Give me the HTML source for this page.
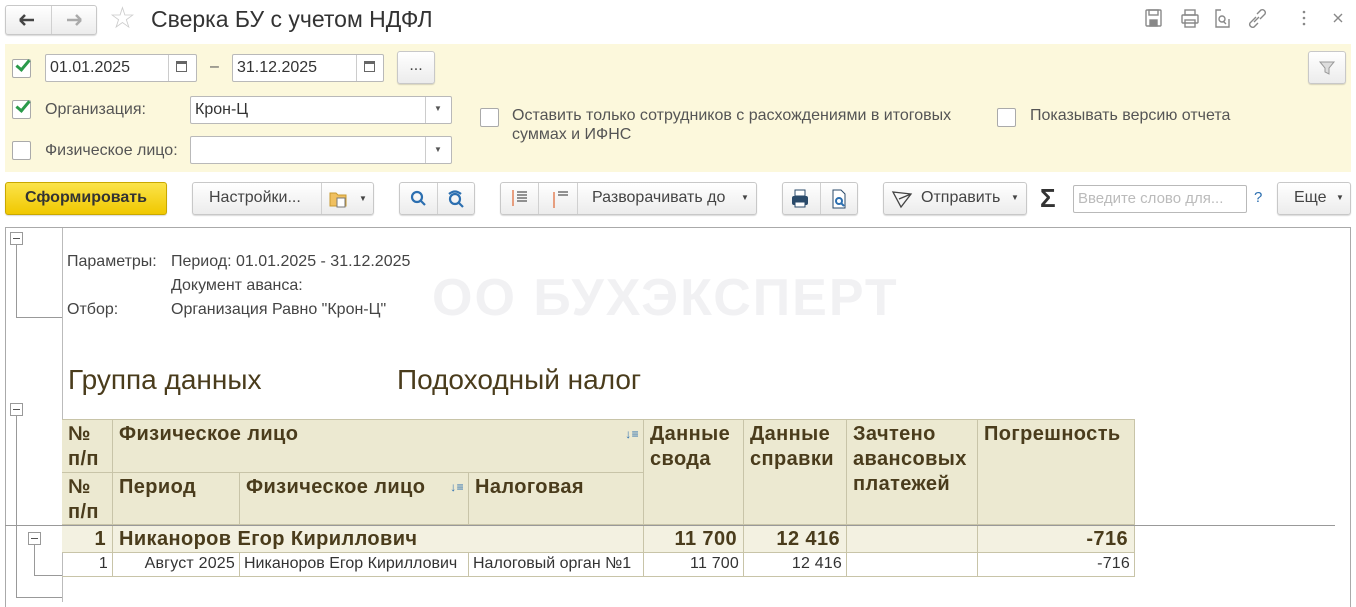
<!DOCTYPE html>
<html><head><meta charset="utf-8"><style>
*{box-sizing:border-box;margin:0;padding:0}
body{width:1356px;height:602px;background:#fff;font-family:"Liberation Sans",Arial,sans-serif;font-size:16px;color:#333;position:relative;overflow:hidden}
.a{position:absolute}
.btn{position:absolute;height:32px;border:1px solid #c8c8c8;border-radius:3px;background:linear-gradient(#fff,#ececec);box-shadow:0 1px 1px rgba(0,0,0,.15);font-size:16px;color:#444;line-height:30px;text-align:center}
.inp{position:absolute;height:28px;border:1px solid #b9b9b9;border-radius:2px;background:#fff;font-size:16px;line-height:26px;padding-left:4px;color:#333}
.cb{position:absolute;width:19px;height:19px;border:1px solid #aaa;border-radius:2px;background:#fff}
.lbl{position:absolute;color:#555;font-size:16px}
.sep{position:absolute;top:0;bottom:0;width:1px;background:#d0d0d0}
.tc{position:absolute;border-right:1px solid #c8c4a8;border-bottom:1px solid #c8c4a8;color:#4a3c1c;font-weight:bold;font-size:20px;line-height:25px;padding:2px 6px;letter-spacing:0.4px}
.dc{position:absolute;border-right:1px solid #c8c4a8;border-bottom:1px solid #c8c4a8;color:#333;font-size:16px;line-height:22px;padding:0 4px;letter-spacing:0.2px}
.hl{position:absolute;background:#999}
.mb{position:absolute;width:13px;height:13px;border:1px solid #999;background:#fff}
.mb:after{content:"";position:absolute;left:2px;top:5px;width:7px;height:1px;background:#555}
.ck{position:absolute;width:14px;height:8px;border-left:3px solid #2a9a4a;border-bottom:3px solid #2a9a4a;transform:rotate(-50deg)}
</style></head><body>

<div class="btn" style="left:5px;top:5px;width:92px;height:30px"></div>
<div class="a" style="left:51px;top:6px;width:1px;height:28px;background:#d0d0d0"></div>
<svg class="a" style="left:17px;top:12px" width="70" height="16"><path d="M3 8h14M3 8l5-5M3 8l5 5" stroke="#444" stroke-width="2.5" fill="none"/><path d="M50 8h14M64 8l-5-5M64 8l-5 5" stroke="#aaa" stroke-width="2.5" fill="none"/></svg>
<div class="a" style="left:109px;top:2px;font-size:30px;color:#ccc;line-height:34px">☆</div>
<div class="a" style="left:151px;top:5px;font-size:23px;color:#333;line-height:28px">Сверка БУ с учетом НДФЛ</div>
<svg class="a" style="left:1144px;top:8px" width="200" height="22" fill="none" stroke="#888" stroke-width="1.4">
<rect x="2" y="2" width="15" height="16" rx="1"/><rect x="5" y="2" width="9" height="5"/><rect x="6" y="12" width="7" height="6" fill="#888"/>
<rect x="41" y="2" width="10" height="5"/><rect x="38" y="7" width="16" height="8" rx="1"/><rect x="41" y="12" width="10" height="7"/>
<path d="M77 2h-5v17h13v-8M79 13l3 3"/><circle cx="78" cy="11" r="3"/>
<path d="M112 9l-6 6a3 3 0 0 0 4 4l4-4M116 11l5-5a3 3 0 0 0-4-4l-4 4M110 14l5-5"/>
<circle cx="160" cy="4" r="1.3" fill="#888" stroke="none"/><circle cx="160" cy="10" r="1.3" fill="#888" stroke="none"/><circle cx="160" cy="16" r="1.3" fill="#888" stroke="none"/>
<path d="M190 6l8 8M198 6l-8 8"/>
</svg>

<div class="a" style="left:5px;top:44px;width:1346px;height:128px;background:#fcf8dc"></div>
<div class="cb" style="left:12px;top:59px"></div><div class="ck" style="left:16px;top:60px"></div>
<div class="inp" style="left:45px;top:54px;width:152px">01.01.2025</div>
<div class="a" style="left:168px;top:55px;width:1px;height:26px;background:#ccc"></div>
<div class="a" style="left:176px;top:61px;width:11px;height:11px;border:1px solid #666;border-top-width:3px"></div>
<div class="a" style="left:210px;top:58px;color:#555">–</div>
<div class="inp" style="left:232px;top:54px;width:152px">31.12.2025</div>
<div class="a" style="left:356px;top:55px;width:1px;height:26px;background:#ccc"></div>
<div class="a" style="left:364px;top:61px;width:11px;height:11px;border:1px solid #666;border-top-width:3px"></div>
<div class="btn" style="left:397px;top:51px;width:38px;height:33px;line-height:28px">...</div>
<div class="btn" style="left:1308px;top:51px;width:38px;height:33px"></div>
<svg class="a" style="left:1318px;top:60px" width="18" height="16"><path d="M2 2h14l-5 6v6l-4-2V8z" fill="#ddd" stroke="#999"/></svg>

<div class="cb" style="left:12px;top:100px"></div><div class="ck" style="left:16px;top:101px"></div>
<div class="lbl" style="left:45px;top:101px">Организация:</div>
<div class="inp" style="left:190px;top:96px;width:262px">Крон-Ц</div>
<div class="a" style="left:425px;top:97px;width:1px;height:26px;background:#ccc"></div>
<div class="a" style="left:434px;top:104px;font-size:8px;color:#555">▼</div>
<div class="cb" style="left:12px;top:141px"></div>
<div class="lbl" style="left:45px;top:142px">Физическое лицо:</div>
<div class="inp" style="left:190px;top:136px;width:262px"></div>
<div class="a" style="left:425px;top:137px;width:1px;height:26px;background:#ccc"></div>
<div class="a" style="left:434px;top:145px;font-size:8px;color:#555">▼</div>
<div class="cb" style="left:480px;top:108px"></div>
<div class="lbl" style="left:512px;top:106px;line-height:19px">Оставить только сотрудников с расхождениями в итоговых<br>суммах и ИФНС</div>
<div class="cb" style="left:997px;top:108px"></div>
<div class="lbl" style="left:1030px;top:106px;line-height:19px">Показывать версию отчета</div>

<div class="btn" style="left:5px;top:182px;width:162px;height:33px;background:linear-gradient(#fbe34a,#f0c800);border-color:#c9a800;font-weight:bold;color:#333">Сформировать</div>
<div class="btn" style="left:192px;top:182px;width:182px;height:33px;text-align:left;padding-left:16px">Настройки...<div class="sep" style="left:128px"></div>
<svg style="position:absolute;left:136px;top:7px" width="20" height="18"><path d="M1 3h6l2 2h8v11H1z" fill="#f0c060" stroke="#c99a30"/><rect x="8" y="8" width="8" height="9" fill="#fff" stroke="#777"/></svg><span style="position:absolute;left:166px;top:1px;font-size:8px">▼</span></div>
<div class="btn" style="left:399px;top:182px;width:76px;height:33px"><div class="sep" style="left:37px"></div></div>
<svg class="a" style="left:409px;top:189px" width="60" height="20" fill="none" stroke="#2c6fb0" stroke-width="2.2"><circle cx="8" cy="8" r="5"/><path d="M12 12l4 4"/><circle cx="46" cy="10" r="5"/><path d="M50 14l4 4M40 5q6-5 12 0"/></svg>
<div class="btn" style="left:500px;top:182px;width:257px;height:33px;text-align:left;padding-left:91px">Разворачивать до<span style="position:absolute;left:240px;font-size:8px">▼</span><div class="sep" style="left:37px"></div><div class="sep" style="left:76px"></div></div>
<svg class="a" style="left:509px;top:188px" width="65" height="22" stroke-width="1.3"><path d="M4 2v16" stroke="#e07040"/><path d="M8 4h10M8 7h10M8 10h10M8 13h10" stroke="#555"/><path d="M45 4v16" stroke="#e07040"/><path d="M49 4h10M49 7h10" stroke="#555"/></svg>
<div class="btn" style="left:782px;top:182px;width:76px;height:33px"><div class="sep" style="left:37px"></div></div>
<svg class="a" style="left:790px;top:188px" width="64" height="22"><rect x="5" y="2" width="10" height="6" fill="#fff" stroke="#2a4a6a"/><rect x="2" y="8" width="16" height="9" rx="2" fill="#2a4a6a"/><rect x="5" y="14" width="10" height="5" fill="#fff" stroke="#2a4a6a"/><path d="M43 2h8l4 4v14H43z" fill="#fff" stroke="#2a4a6a"/><circle cx="49" cy="13" r="3" fill="none" stroke="#2c6fb0" stroke-width="2"/><path d="M51 15l3 3" stroke="#2c6fb0" stroke-width="2"/></svg>
<div class="btn" style="left:883px;top:182px;width:144px;height:33px;text-align:left;padding-left:37px">Отправить<span style="position:absolute;left:127px;font-size:8px">▼</span></div>
<svg class="a" style="left:891px;top:189px" width="22" height="20"><path d="M2 3l18 2-10 13z M8 10l12-5" fill="none" stroke="#444" stroke-width="1.3"/></svg>
<div class="a" style="left:1040px;top:183px;font-size:26px;font-weight:bold;color:#333">Σ</div>
<div class="inp" style="left:1073px;top:185px;width:174px;height:28px;color:#bbb;font-size:15px">Введите слово для...</div>
<div class="a" style="left:1254px;top:189px;color:#2c6fb0;font-size:15px">?</div>
<div class="btn" style="left:1277px;top:182px;width:74px;height:33px;text-align:left;padding-left:16px">Еще<span style="position:absolute;left:58px;font-size:8px">▼</span></div>

<div class="a" style="left:5px;top:227px;width:1346px;height:380px;border:1px solid #aaa;border-bottom:none"></div>
<div class="hl" style="left:62px;top:228px;width:1px;height:374px;background:#bbb"></div>
<div class="mb" style="left:10px;top:232px"></div>
<div class="hl" style="left:16px;top:245px;width:1px;height:73px"></div>
<div class="hl" style="left:16px;top:317px;width:46px;height:1px"></div>
<div class="mb" style="left:10px;top:403px"></div>
<div class="hl" style="left:16px;top:416px;width:1px;height:182px"></div>
<div class="hl" style="left:16px;top:597px;width:46px;height:1px"></div>
<div class="mb" style="left:28px;top:532px"></div>
<div class="hl" style="left:34px;top:545px;width:1px;height:31px"></div>
<div class="hl" style="left:34px;top:575px;width:28px;height:1px"></div>

<div class="a" style="left:432px;top:268px;font-size:52px;font-weight:bold;color:#f1f1f3;letter-spacing:2px">ОО БУХЭКСПЕРТ</div>

<div class="a" style="left:67px;top:250px;font-size:16px;color:#444;line-height:24px">Параметры:<br><br>Отбор:</div>
<div class="a" style="left:171px;top:250px;font-size:16px;color:#444;line-height:24px">Период: 01.01.2025 - 31.12.2025<br>Документ аванса:<br>Организация Равно "Крон-Ц"</div>
<div class="a" style="left:68px;top:364px;font-size:28px;color:#4a3c1c">Группа данных</div>
<div class="a" style="left:397px;top:364px;font-size:28px;color:#4a3c1c">Подоходный налог</div>

<div class="a" style="left:62px;top:419px;width:1073px;height:106px;background:#ece9d1;border-top:1px solid #c8c4a8"></div>
<div class="tc" style="left:62px;top:420px;width:51px;height:53px">№<br>п/п</div>
<div class="tc" style="left:113px;top:420px;width:531px;height:53px">Физическое лицо<span style="position:absolute;right:4px;top:2px;font-size:12px;color:#2c6fb0">↓≡</span></div>
<div class="tc" style="left:62px;top:473px;width:51px;height:52px">№<br>п/п</div>
<div class="tc" style="left:113px;top:473px;width:127px;height:52px">Период</div>
<div class="tc" style="left:240px;top:473px;width:229px;height:52px">Физическое лицо<span style="position:absolute;right:4px;top:2px;font-size:12px;color:#2c6fb0">↓≡</span></div>
<div class="tc" style="left:469px;top:473px;width:175px;height:52px">Налоговая</div>
<div class="tc" style="left:644px;top:420px;width:100px;height:105px">Данные<br>свода</div>
<div class="tc" style="left:744px;top:420px;width:103px;height:105px">Данные<br>справки</div>
<div class="tc" style="left:847px;top:420px;width:131px;height:105px">Зачтено<br>авансовых<br>платежей</div>
<div class="tc" style="left:978px;top:420px;width:157px;height:105px">Погрешность</div>
<div class="hl" style="left:5px;top:525px;width:1330px;height:1px"></div>
<div class="a" style="left:62px;top:526px;width:1073px;height:27px;background:#f3f1e1"></div>
<div class="tc" style="left:62px;top:526px;width:51px;height:27px;text-align:right;line-height:23px">1</div>
<div class="tc" style="left:113px;top:526px;width:531px;height:27px;line-height:23px">Никаноров Егор Кириллович</div>
<div class="tc" style="left:644px;top:526px;width:100px;height:27px;text-align:right;line-height:23px">11 700</div>
<div class="tc" style="left:744px;top:526px;width:103px;height:27px;text-align:right;line-height:23px">12 416</div>
<div class="tc" style="left:847px;top:526px;width:131px;height:27px"></div>
<div class="tc" style="left:978px;top:526px;width:157px;height:27px;text-align:right;line-height:23px">-716</div>
<div class="dc" style="left:62px;top:553px;width:51px;height:24px;text-align:right">1</div>
<div class="dc" style="left:113px;top:553px;width:127px;height:24px;text-align:right">Август 2025</div>
<div class="dc" style="left:240px;top:553px;width:229px;height:24px;letter-spacing:0">Никаноров Егор Кириллович</div>
<div class="dc" style="left:469px;top:553px;width:175px;height:24px;letter-spacing:0">Налоговый орган №1</div>
<div class="dc" style="left:644px;top:553px;width:100px;height:24px;text-align:right">11 700</div>
<div class="dc" style="left:744px;top:553px;width:103px;height:24px;text-align:right">12 416</div>
<div class="dc" style="left:847px;top:553px;width:131px;height:24px"></div>
<div class="dc" style="left:978px;top:553px;width:157px;height:24px;text-align:right">-716</div>
</body></html>
